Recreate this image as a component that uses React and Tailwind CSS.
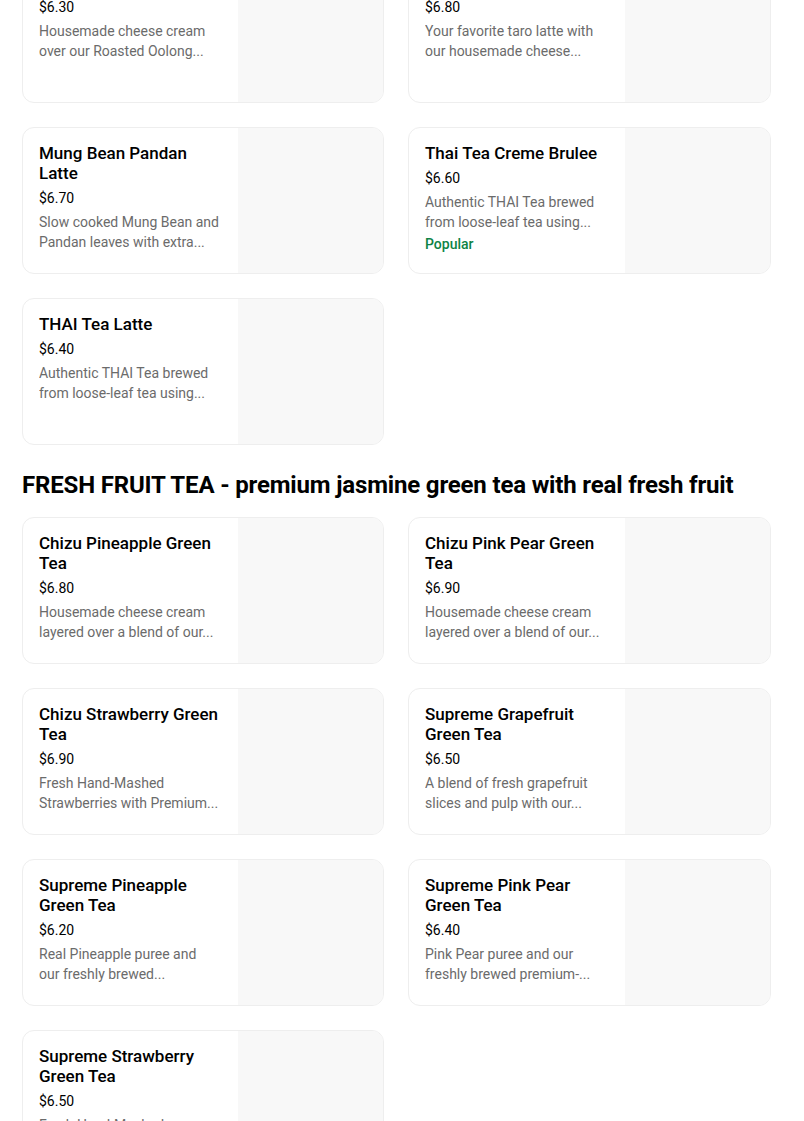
const sections = [
  {
    title: null,
    items: [
      { name: "Chizu Oolong Tea", price: "$6.30", desc: "Housemade cheese cream over our Roasted Oolong..." },
      { name: "Chizu Taro Latte", price: "$6.80", desc: "Your favorite taro latte with our housemade cheese..." },
      { name: "Mung Bean Pandan Latte", price: "$6.70", desc: "Slow cooked Mung Bean and Pandan leaves with extra..." },
      { name: "Thai Tea Creme Brulee", price: "$6.60", desc: "Authentic THAI Tea brewed from loose-leaf tea using...", popular: true },
      { name: "THAI Tea Latte", price: "$6.40", desc: "Authentic THAI Tea brewed from loose-leaf tea using..." },
    ],
  },
  {
    title: "FRESH FRUIT TEA - premium jasmine green tea with real fresh fruit",
    items: [
      { name: "Chizu Pineapple Green Tea", price: "$6.80", desc: "Housemade cheese cream layered over a blend of our..." },
      { name: "Chizu Pink Pear Green Tea", price: "$6.90", desc: "Housemade cheese cream layered over a blend of our..." },
      { name: "Chizu Strawberry Green Tea", price: "$6.90", desc: "Fresh Hand-Mashed Strawberries with Premium..." },
      { name: "Supreme Grapefruit Green Tea", price: "$6.50", desc: "A blend of fresh grapefruit slices and pulp with our..." },
      { name: "Supreme Pineapple Green Tea", price: "$6.20", desc: "Real Pineapple puree and our\u00a0freshly brewed..." },
      { name: "Supreme Pink Pear Green Tea", price: "$6.40", desc: "Pink Pear puree and our freshly brewed premium-..." },
      { name: "Supreme Strawberry Green Tea", price: "$6.50", desc: "Fresh Hand-Mashed Strawberries with Premium..." },
    ],
  },
];

function ItemCard({ item }) {
  return (
    <div className="flex h-[147px] overflow-hidden rounded-xl border border-[#eeeeee] bg-white">
      <div className="min-w-0 flex-1 px-4 pt-[15px]">
        <div className="text-[17px] font-medium leading-5 text-black">{item.name}</div>
        <div className="mt-[5px] text-[14px] leading-5 text-black">{item.price}</div>
        <div className="mt-1 line-clamp-2 text-[14px] leading-5 text-[#6b6b6b]">{item.desc}</div>
        {item.popular && (
          <div className="mt-0.5 text-[14px] font-medium leading-5 text-[#0e8345]">Popular</div>
        )}
      </div>
      <div className="w-[145px] shrink-0 bg-[#f8f8f8]" />
    </div>
  );
}

export default function App() {
  return (
    <div className="min-h-screen bg-white font-['Roboto',sans-serif]">
      <div className="-mt-[44px] ml-[22px] w-[749px]">
        {sections.map((section, i) => (
          <section key={i}>
            {section.title && (
              <h2 className="mb-4 mt-6 text-[24px] font-bold leading-8 tracking-[-0.007em] text-black">
                {section.title}
              </h2>
            )}
            <div className="grid grid-cols-[362px_363px] gap-6">
              {section.items.map((item) => (
                <ItemCard key={item.name} item={item} />
              ))}
            </div>
          </section>
        ))}
      </div>
    </div>
  );
}
